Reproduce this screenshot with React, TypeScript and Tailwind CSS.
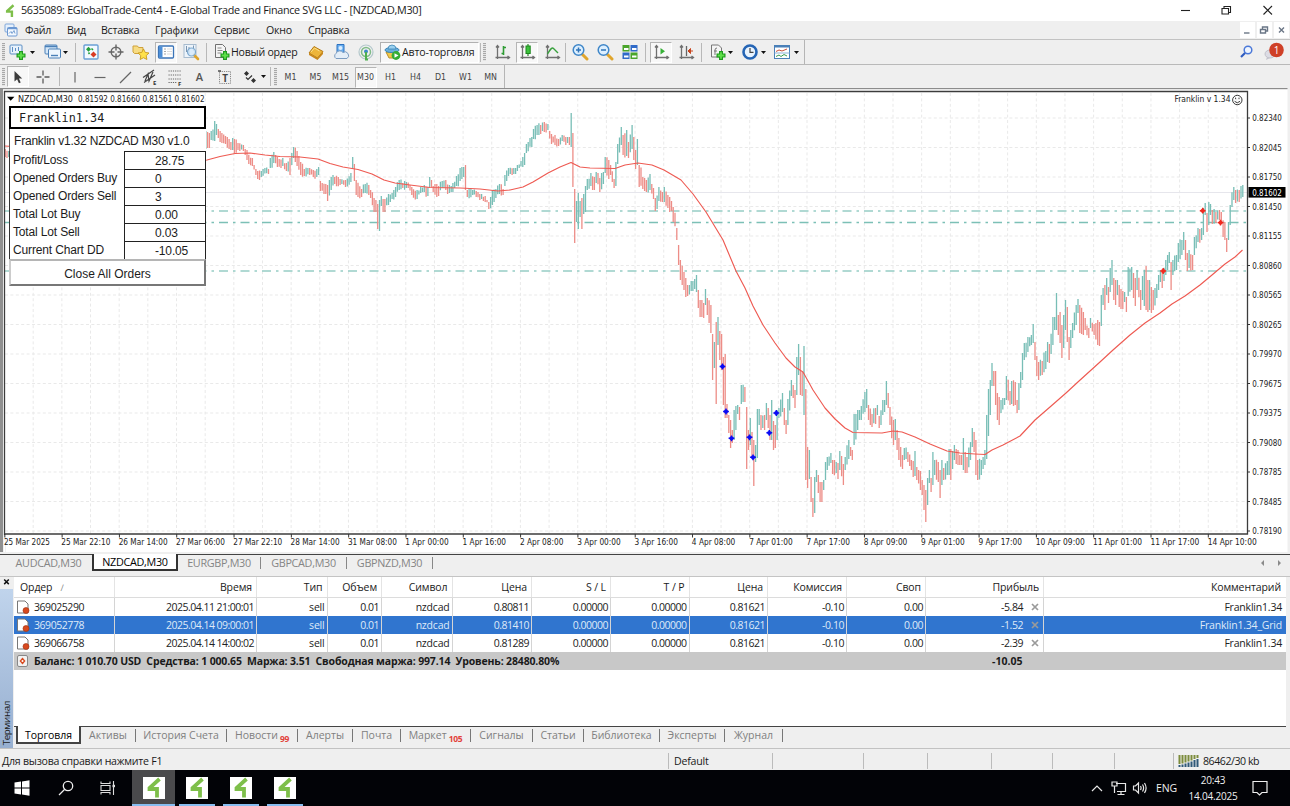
import React from "react";

type Point = [number, number, number];

// x, high, low of the notable bars, everything between is interpolated
const swings: Point[] = [
  [5, 149, 157], [9, 151, 157], [30, 140, 150], [120, 135, 145], [206, 131, 149], [209, 133, 148], [212, 131, 140],
  [215, 121, 141], [217, 124, 135], [220, 131, 142], [222, 133, 143], [226, 136, 144], [230, 142, 150],
  [234, 139, 153], [238, 143, 150], [243, 145, 151], [247, 150, 160], [252, 158, 166], [257, 171, 179],
  [262, 171, 177], [268, 169, 174], [271, 158, 168], [274, 152, 163], [277, 157, 167], [282, 158, 166],
  [286, 163, 171], [290, 158, 175], [292, 153, 165], [294, 147, 158], [297, 151, 166], [300, 162, 175],
  [305, 169, 176], [310, 168, 175], [316, 169, 177], [319, 167, 175], [321, 181, 191], [325, 184, 194],
  [328, 185, 201], [331, 177, 190], [335, 177, 184], [340, 179, 185], [345, 180, 187], [350, 173, 182],
  [352, 157, 169], [354, 164, 181], [357, 180, 195], [361, 189, 197], [365, 184, 193], [368, 185, 195],
  [371, 190, 198], [374, 198, 212], [376, 200, 212], [378, 204, 229], [380, 200, 231], [381, 196, 206],
  [384, 199, 212], [388, 194, 205], [392, 193, 199], [396, 187, 197], [399, 180, 190], [403, 183, 188],
  [407, 182, 188], [412, 187, 195], [417, 190, 199], [421, 187, 193], [424, 185, 192], [427, 187, 196],
  [430, 177, 187], [433, 186, 192], [438, 186, 196], [442, 181, 188], [445, 180, 190], [449, 185, 193],
  [453, 183, 192], [457, 176, 186], [461, 168, 181], [463, 167, 177], [465, 165, 190], [468, 190, 197],
  [472, 190, 195], [477, 191, 197], [481, 194, 199], [486, 196, 202], [489, 202, 209], [492, 190, 205],
  [496, 189, 198], [500, 184, 194], [503, 189, 195], [505, 175, 186], [509, 168, 176], [513, 168, 174],
  [518, 165, 171], [522, 157, 167], [525, 153, 165], [527, 144, 153], [531, 137, 147], [534, 129, 139],
  [538, 125, 135], [541, 125, 134], [544, 122, 132], [548, 124, 130], [551, 134, 144], [555, 135, 145],
  [559, 139, 146], [562, 135, 141], [565, 137, 145], [568, 137, 143], [570, 137, 145], [571.5, 113, 147],
  [573, 133, 187], [575, 189, 243], [577, 201, 222], [578.5, 193, 229], [580, 201, 217], [582, 198, 229],
  [584, 194, 214], [586, 186, 212], [588, 179, 190], [591, 173, 186], [594, 177, 190], [597, 172, 183],
  [600, 178, 192], [603, 172, 184], [605, 157, 173], [608, 160, 179], [611, 165, 175], [614, 179, 188],
  [616, 162, 186], [618, 144, 164], [621, 127, 145], [623, 135, 155], [626, 130, 156], [629, 142, 158],
  [632, 125, 149], [634, 137, 160], [636, 150, 169], [638, 139, 165], [640, 165, 187], [643, 177, 189],
  [646, 180, 192], [650, 174, 190], [653, 188, 199], [656, 198, 211], [659, 187, 201], [662, 192, 202],
  [664, 187, 202], [667, 195, 208], [671, 201, 211], [674, 207, 222], [677, 228, 240], [679, 245, 265],
  [681, 260, 280], [684, 272, 290], [686, 278, 297], [688, 285, 296], [691, 281, 291], [694, 279, 289],
  [696, 275, 292], [698, 290, 308], [701, 300, 317], [703, 303, 318], [705, 289, 305], [708, 298, 315],
  [710, 305, 333], [711.5, 323, 355], [713, 334, 380], [714.5, 342, 368], [716.5, 322, 404], [718, 317, 345],
  [720, 331, 360], [722, 334, 370], [723.5, 357, 405], [725, 354, 418], [727, 404, 418], [729, 415, 433],
  [731, 420, 448], [733, 430, 443], [735, 410, 440], [737, 405, 414], [739, 407, 420], [742, 385, 404],
  [744, 387, 402], [746.5, 407, 469], [748.5, 430, 450], [750, 418, 445], [751.5, 432, 458], [753.5, 440, 486],
  [755.5, 445, 462], [757, 409, 458], [759, 409, 425], [761, 415, 430], [764, 415, 430], [766, 403, 420],
  [768, 408, 428], [770, 415, 440], [772, 400, 440], [774, 421, 450], [776, 425, 448], [777.5, 410, 440],
  [779, 408, 418], [782, 393, 412], [784, 408, 425], [786, 420, 434], [788, 399, 425], [791, 380, 396],
  [793, 385, 398], [795, 390, 408], [797, 357, 395], [798.5, 344, 375], [800.5, 357, 395], [802.5, 372, 396],
  [804, 346, 415], [806, 389, 480], [807.5, 447, 488], [809, 450, 479], [811, 477, 502], [813, 498, 517],
  [815, 477, 513], [817, 470, 482], [819, 475, 493], [821, 482, 502], [823, 480, 490], [825, 462, 480],
  [828, 457, 470], [831, 453, 463], [833, 460, 474], [836, 462, 473], [838, 463, 479], [840, 451, 470],
  [843, 464, 485], [845, 457, 470], [848, 440, 459], [851, 447, 456], [853, 450, 460], [855, 414, 445],
  [857, 410, 430], [860, 410, 420], [862, 406, 420], [864, 392, 412], [866, 389, 408], [868, 405, 420],
  [872, 414, 427], [875, 408, 424], [877, 405, 415], [880, 416, 428], [883, 400, 415], [885, 400, 412],
  [886.5, 381, 405], [888, 393, 408], [890, 407, 425], [893, 420, 445], [895, 419, 440], [897, 430, 450],
  [899, 438, 460], [902, 455, 469], [905, 448, 460], [908, 452, 462], [911, 460, 470], [913, 461, 477],
  [915, 451, 476], [917, 467, 480], [920, 471, 490], [922, 480, 495], [924, 485, 510], [925.5, 490, 522],
  [927, 478, 505], [929, 470, 483], [931, 478, 492], [933, 452, 485], [935, 460, 475], [938, 462, 482],
  [940, 470, 498], [942, 460, 485], [944, 468, 480], [947, 461, 475], [949, 449, 475], [951, 449, 480],
  [953, 451, 469], [955, 445, 460], [958, 450, 465], [961, 455, 465], [963, 438, 470], [965, 452, 473],
  [967, 457, 473], [970, 442, 460], [972, 428, 447], [974, 432, 452], [976, 440, 475], [978, 460, 480],
  [981, 460, 475], [983, 457, 469], [985, 450, 465], [987, 415, 459], [988.5, 389, 436], [990.5, 380, 415],
  [992, 363, 386], [994, 371, 386], [996, 371, 405], [998, 393, 420], [999.5, 397, 425], [1001, 400, 413],
  [1004, 398, 405], [1005, 378, 402], [1007, 376, 400], [1010, 391, 405], [1012, 381, 404], [1015, 382, 405],
  [1017, 400, 413], [1019, 383, 410], [1021, 372, 388], [1023, 353, 380], [1025, 343, 360], [1028, 337, 352],
  [1031, 335, 345], [1033, 324, 343], [1035, 342, 360], [1037, 356, 376], [1039, 362, 380], [1042, 361, 375],
  [1045, 351, 369], [1048, 342, 362], [1050, 344, 363], [1053, 317, 345], [1055, 317, 330], [1056.5, 293, 330],
  [1058, 315, 335], [1060, 312, 343], [1062, 325, 358], [1064, 315, 348], [1066, 300, 330], [1067.5, 307, 342],
  [1069, 337, 360], [1071, 330, 348], [1073, 323, 338], [1076, 305, 325], [1078, 299, 313], [1080, 305, 333],
  [1083, 312, 335], [1085, 318, 330], [1088, 328, 338], [1091, 318, 328], [1094, 324, 335], [1097, 320, 345],
  [1099, 322, 346], [1101, 295, 326], [1103, 288, 305], [1105, 285, 310], [1107, 278, 295], [1109, 287, 303],
  [1111, 268, 292], [1112.5, 260, 285], [1114, 278, 300], [1116, 280, 305], [1118, 280, 295], [1120, 285, 307],
  [1122, 291, 309], [1125, 292, 302], [1127, 297, 312], [1129, 267, 296], [1131, 267, 290], [1134, 273, 298],
  [1136, 278, 306], [1138, 270, 290], [1140, 290, 310], [1141, 298, 319], [1143, 276, 300], [1146, 266, 310],
  [1148, 280, 312], [1150, 280, 310], [1152, 287, 313], [1154, 290, 310], [1156, 284, 298], [1159, 275, 290],
  [1161, 270, 282], [1163, 272, 288], [1165, 260, 275], [1167, 255, 270], [1168.5, 252, 263], [1171, 262, 290],
  [1173, 260, 275], [1176, 255, 270], [1179, 243, 262], [1181, 240, 255], [1184, 232, 250], [1186, 240, 260],
  [1188, 253, 271], [1189.5, 250, 268], [1192, 255, 270], [1195, 237, 255], [1198, 228, 242], [1201, 228, 240],
  [1203, 208, 235], [1205, 203, 215], [1207, 213, 232], [1209, 202, 225], [1211, 204, 215], [1213, 210, 224],
  [1216, 212, 223], [1219, 210, 220], [1221, 212, 224], [1224, 222, 240], [1227, 238, 252], [1228.5, 222, 240],
  [1229.5, 205, 225], [1231, 195, 212], [1233, 187, 200], [1236, 190, 203], [1239, 190, 202], [1243, 185, 197],
];

const average: [number, number][] = [
  [5, 146], [20, 147], [60, 150], [120, 158], [190, 162], [207, 160], [220, 156.5], [235, 153.5], [250, 153],
  [265, 155], [280, 156.5], [300, 157], [318, 159], [330, 163.5], [343, 167], [358, 169.5], [372, 174],
  [384, 180], [395, 183], [410, 185], [430, 187.5], [460, 188], [480, 189], [498, 191], [510, 190], [523, 187],
  [533, 182], [548, 173], [560, 167], [571, 162.5], [580, 167], [590, 168], [615, 168.5], [625, 165],
  [638, 163], [652, 165], [664, 170], [681, 180], [693, 194], [706, 212], [723, 240], [736, 271], [745, 288],
  [753, 306], [763, 325], [775, 343], [786, 358], [795, 367], [803, 372], [813, 390], [825, 408], [835, 419],
  [845, 428], [853, 432.5], [882, 433], [893, 431], [902, 432], [915, 437], [930, 444], [947, 451],
  [960, 453], [975, 454], [985, 454.5], [992, 450], [1003, 445], [1020, 436], [1035, 420], [1050, 407],
  [1066, 393], [1079, 381], [1100, 362], [1113, 350], [1130, 335], [1145, 323], [1160, 313], [1172, 304],
  [1185, 296], [1200, 285], [1212, 275], [1225, 264], [1235, 257], [1242.5, 250],
];

const buildBars = () => {
  let up = "";
  let down = "";
  let prev = 150;
  let i = 0;
  for (let n = 0; n < 692; n++) {
    const x = 5.2 + n * 1.791;
    while (i < swings.length - 2 && swings[i + 1][0] < x) i++;
    const a = swings[i];
    const b = swings[i + 1];
    let hi: number;
    let lo: number;
    if (Math.abs(a[0] - x) < 0.9) {
      [, hi, lo] = a;
    } else if (Math.abs(b[0] - x) < 0.9) {
      [, hi, lo] = b;
    } else {
      const t = Math.min(1, (x - a[0]) / (b[0] - a[0]));
      hi = a[1] + (b[1] - a[1]) * t + Math.sin(n * 12.9) * 2;
      lo = a[2] + (b[2] - a[2]) * t + Math.cos(n * 7.3) * 2;
    }
    const mid = (hi + lo) / 2;
    const seg = `M${x.toFixed(1)} ${hi.toFixed(1)}V${lo.toFixed(1)}`;
    if (mid < prev) up += seg;
    else down += seg;
    prev = mid;
  }
  return { up, down };
};

const bars = buildBars();

const dates = [
  "25 Mar 2025", "25 Mar 22:10", "26 Mar 14:00", "27 Mar 06:00", "27 Mar 22:10", "28 Mar 14:00", "31 Mar 08:00",
  "1 Apr 00:00", "1 Apr 16:00", "2 Apr 08:00", "3 Apr 00:00", "3 Apr 16:00", "4 Apr 08:00", "7 Apr 01:00",
  "7 Apr 17:00", "8 Apr 09:00", "9 Apr 01:00", "9 Apr 17:00", "10 Apr 09:00", "11 Apr 01:00", "11 Apr 17:00",
  "14 Apr 10:00",
];

const prices = [
  "0.82340", "0.82045", "0.81750", "0.81450", "0.81155", "0.80860", "0.80565", "0.80265", "0.79970", "0.79675",
  "0.79375", "0.79080", "0.78785", "0.78485", "0.78190",
];

const dateWidth = (d: string) => (d === "25 Mar 2025" ? 46 : d.length === 12 ? 49 : 43.5);

const Marker = ({ x, y, color }: { x: number; y: number; color: string }) => (
  <g fill={color} stroke={color}>
    <circle cx={x} cy={y} r="1.900" strokeWidth="0.400" />
    <path d={`M${x} ${y - 2.9}v5.800M${x - 2.9} ${y}h5.800`} strokeWidth="1.400" />
  </g>
);

const Chart = () => (
  <svg viewBox="0 88 1290 464" className="block h-[464px] w-[1290px]" fontFamily="'DejaVu Sans Condensed','DejaVu Sans',sans-serif">
    <rect x="0" y="88" width="1290" height="464" fill="#fff" />
    <rect x="0" y="88" width="3" height="464" fill="#909090" />
    <rect x="0" y="87.6" width="1288" height="1.6" fill="#8c8c8c" />
    <rect x="1287.5" y="88" width="2.5" height="464" fill="#efefef" />
    <g stroke="#e9e9e9" strokeDasharray="3 2.4" strokeWidth="1">
      {Array.from({ length: 43 }, (_, n) => (
        <line key={n} x1={33.2 + n * 28.66} x2={33.2 + n * 28.66} y1="93" y2="534" />
      ))}
      {prices.map((p, n) => (
        <line key={p} x1="5" x2="1247" y1={118 + n * 29.5} y2={118 + n * 29.5} />
      ))}
    </g>
    <line x1="5" x2="1247" y1="192.5" y2="192.5" stroke="#e6e6ec" />
    <g strokeWidth="1.5" strokeDasharray="9 5 2.5 5" strokeDashoffset="1">
      <line x1="5" x2="1247" y1="211" y2="211" stroke="#96cdc5" />
      <line x1="5" x2="1247" y1="222.6" y2="222.6" stroke="#7cc0b6" />
      <line x1="5" x2="1247" y1="271" y2="271" stroke="#96cdc5" />
    </g>
    <path d={bars.up} stroke="#78beb6" strokeWidth="1.3" fill="none" />
    <path d={bars.down} stroke="#ed8d87" strokeWidth="1.3" fill="none" />
    <polyline points={average.map((p) => p.join(",")).join(" ")} fill="none" stroke="#ee5a52" strokeWidth="1.15" strokeLinejoin="round" />
    {[[722.5, 366.5], [726, 411.5], [731.5, 438.3], [749.5, 437.3], [753, 457.3], [769.3, 432.8], [776.3, 413]].map(([x, y]) => (
      <Marker key={x} x={x} y={y} color="#0a0af5" />
    ))}
    {[[1202.7, 210.7], [1220.5, 222.6], [1163.2, 271]].map(([x, y]) => (
      <Marker key={x} x={x} y={y} color="#f2281e" />
    ))}
    <path d="M4.5 552V91.5H1247.5V534H4.5" fill="none" stroke="#3c3c3c" strokeWidth="1.3" />
    <rect x="3.5" y="535" width="2" height="17" fill="#fff" />
    {dates.map((d, n) => (
      <g key={d}>
        <line x1={4.8 + n * 57.31} x2={4.8 + n * 57.31} y1="534" y2="537.5" stroke="#333" />
        <text x={4 + n * 57.32} y="545.2" fontSize="8.4" fill="#222" textLength={dateWidth(d)} lengthAdjust="spacingAndGlyphs">
          {d}
        </text>
      </g>
    ))}
    {prices.map((p, n) => (
      <g key={p}>
        <line x1="1247" x2="1250" y1={118 + n * 29.5} y2={118 + n * 29.5} stroke="#333" />
        <text x="1252.3" y={121 + n * 29.5} fontSize="8.6" fill="#222" textLength="29.6" lengthAdjust="spacingAndGlyphs">
          {p}
        </text>
      </g>
    ))}
    <rect x="1248.5" y="187" width="37" height="10.6" fill="#000" />
    <text x="1252.3" y="195.6" fontSize="8.6" fill="#fff" textLength="29.6" lengthAdjust="spacingAndGlyphs">0.81602</text>
    <path d="M7 96.7h7.4l-3.7 4z" fill="#000" />
    <text x="18" y="101.8" fontSize="8.6" fill="#222" textLength="55" lengthAdjust="spacingAndGlyphs">NZDCAD,M30</text>
    <text x="78" y="101.8" fontSize="8.6" fill="#222" textLength="126.5" lengthAdjust="spacingAndGlyphs">
      0.81592 0.81660 0.81561 0.81602
    </text>
    <text x="1174.5" y="102.3" fontSize="8.8" fill="#222" textLength="56" lengthAdjust="spacingAndGlyphs">Franklin v 1.34</text>
    <g stroke="#222" fill="none" strokeWidth="0.9">
      <circle cx="1237.3" cy="100" r="4.7" />
      <path d="M1234.6 101.3q2.7 3 5.4 0M1235.6 97.6v1.6M1239 97.6v1.6" />
    </g>
  </svg>
);

const stats = [
  ["Profit/Loss", "28.75"],
  ["Opened Orders Buy", "0"],
  ["Opened Orders Sell", "3"],
  ["Total Lot Buy", "0.00"],
  ["Total Lot Sell", "0.03"],
  ["Current Chart DD", "-10.05"],
];

const FranklinPanel = () => (
  <div className="absolute left-[9px] top-[18px] w-[197px] bg-white font-['Liberation_Sans',sans-serif] text-[12px] text-[#1c1c1c]">
    <div className="flex h-[23px] items-center border-2 border-black pl-2 pt-0.5 font-['DejaVu_Sans_Mono',monospace] text-[11.8px]">
      Franklin1.34
    </div>
    <div className="flex h-[22px] items-end border-l border-[#555] pb-0.5 pl-1 leading-4">
      <span className="tracking-[-0.2px]">Franklin v1.32 NZDCAD M30 v1.0</span>
    </div>
    <div className="grid grid-cols-[114px_82px] border-l border-[#333]">
      {stats.map(([label, value]) => (
        <React.Fragment key={label}>
          <span className="flex h-[18px] items-center pl-[3px] tracking-[-0.15px]">{label}</span>
          <span className="flex h-[18px] items-center border border-b-0 border-[#222] pl-[30px] pt-px tracking-[-0.15px]">{value}</span>
        </React.Fragment>
      ))}
    </div>
    <div className="flex h-[27px] items-center justify-center border-2 border-[#777] border-l-[#ccc] border-t-[#b5b5b5] pt-0.5">
      Close All Orders
    </div>
  </div>
);

const Logo = ({ className }: { className: string }) => (
  <svg viewBox="0 0 22 22" className={className}>
    <path d="M16.500 2L6.500 11v1H14v8.500" fill="none" stroke="#7ebf4a" strokeWidth="3.800" />
  </svg>
);

const Ico = ({ children }: { children: React.ReactNode }) => (
  <svg viewBox="0 0 18 18" className="h-[18px] w-[18px] shrink-0">
    {children}
  </svg>
);

const Cell = ({ children, on = false }: { children: React.ReactNode; on?: boolean }) =>
  on ? (
    <div className="mx-[1.5px] flex h-[21px] w-[22px] shrink-0 items-center justify-center border border-[#b5b5b5] border-b-white border-r-white bg-[#f8f8f8]">
      {children}
    </div>
  ) : (
    <div className="flex w-[25px] shrink-0 items-center justify-center">{children}</div>
  );

const Arrow = ({ className = "" }: { className?: string }) => (
  <svg viewBox="0 0 5 3" className={`h-[3px] w-[5px] shrink-0 ${className}`}>
    <path d="M0 0h5l-2.500 3z" fill="#111" />
  </svg>
);

const Sep = ({ className = "" }: { className?: string }) => (
  <div className={`h-[19px] w-px shrink-0 bg-[#b8b8b8] ${className}`} />
);

const Grip = () => <div className="h-[18px] w-[3px] shrink-0 bg-[repeating-linear-gradient(#a8a8a8_0_1px,#e4e4e4_1px_2px)]" />;

const plus = <path d="M12 8v9M7.500 12.500h9" stroke="#1f9a1f" strokeWidth="4" />;
const plusHi = <path d="M12 9.200v6.600M8.700 12.500h6.600" stroke="#5fe04a" strokeWidth="1.8" />;
const axes = (
  <path d="M4.500 2.500V16M2.500 14.500H16M3 4.500l1.500-2 1.500 2M14.500 13l2 1.500-2 1.500" fill="none" stroke="#707070" strokeWidth="1.3" />
);

const Zoom = ({ minus }: { minus?: boolean }) => (
  <Ico>
    <path d="M11.500 11.500L16 16" stroke="#e0a52c" strokeWidth="3" strokeLinecap="round" />
    <circle cx="7.500" cy="7" r="5.300" fill="#dcefff" stroke="#3f86c8" strokeWidth="1.5" />
    <path d={minus ? "M5 7h5" : "M5 7h5M7.500 4.500v5"} stroke="#2f74b8" strokeWidth="1.5" />
  </Ico>
);

const StandardToolbar = () => (
  <div className="flex h-[25px] items-center border-b border-[#b9b9b9]">
    <div className="flex h-full w-[805px] items-center border-r border-[#b5b5b5] pl-0.5">
      <Grip />
      <Cell>
        <Ico>
          <rect x="1" y="2" width="12" height="9" rx="1" fill="#e8f2fc" stroke="#5d8fc4" />
          <path d="M3.500 4v5M6.500 5v3M9.500 4v4" stroke="#5d8fc4" />
          {plus}
          {plusHi}
        </Ico>
      </Cell>
      <Arrow />
      <div className="w-[5px]" />
      <Cell>
        <Ico>
          <rect x="1" y="2" width="12" height="9" rx="1" fill="#d5e7f8" stroke="#4a80b8" />
          <path d="M1 3.500h12" stroke="#4a80b8" strokeWidth="1.5" />
          <rect x="4.500" y="6" width="12" height="9" rx="1" fill="#eef6fd" stroke="#4a80b8" />
          <path d="M7 12.500h7" stroke="#4a80b8" strokeWidth="1.4" />
        </Ico>
      </Cell>
      <Arrow className="-ml-0.5" />
      <Sep className="ml-[7px] mr-0.5" />
      <Cell>
        <Ico>
          <rect x="2" y="2" width="14" height="14" rx="1" fill="#f3f9ff" stroke="#6ba0d6" strokeWidth="1.4" />
          <path d="M6.500 3.800l2.500 2.500-2.500 2.500L4 6.300z" fill="#24a03c" />
          <path d="M11.500 8.500l3 3-3 3-3-3z" fill="#d93a24" />
          <path d="M9.500 5.500l1.500 1.500M6.500 9.500l1 1.500" stroke="#24a03c" strokeWidth="1.600" />
        </Ico>
      </Cell>
      <Cell>
        <Ico>
          <circle cx="9" cy="9" r="4.800" fill="none" stroke="#666" strokeWidth="1.4" />
          <path d="M9 1.500v6M9 10.500v6M1.500 9h6M10.500 9h6" stroke="#666" strokeWidth="1.400" />
        </Ico>
      </Cell>
      <Cell>
        <Ico>
          <path d="M1 3h4.500l1 1.500H11v6H2.500L1 9z" fill="#f7dc83" stroke="#cfa13a" />
          <path d="M11.500 6l1.700 3.400 3.800.6-2.800 2.600.7 3.900-3.400-1.800-3.400 1.800.7-3.900L6 10l3.800-.6z" fill="#ffe14a" stroke="#c89a1c" strokeWidth=".9" />
        </Ico>
      </Cell>
      <Cell on>
        <Ico>
          <rect x="1.500" y="3" width="15" height="12" rx="1" fill="#fff" stroke="#3b74b8" strokeWidth="1.300" />
          <rect x="2" y="3.500" width="3.500" height="11" fill="#4d8fd8" />
          <path d="M7.500 6h1M7.500 8.500h1M7.500 11h1" stroke="#555" />
          <path d="M10 6h5M10 8.500h5M10 11h5" stroke="#ccc" strokeWidth=".7" />
        </Ico>
      </Cell>
      <Cell>
        <Ico>
          <rect x="2" y="1.500" width="12" height="13" fill="#edf4fb" stroke="#a8bccf" />
          <path d="M4.500 3v6M7 4v7M11.500 2.500v5" stroke="#7b95af" />
          <path d="M12 12l4 4" stroke="#e0a52c" strokeWidth="2.600" strokeLinecap="round" />
          <circle cx="9.500" cy="9" r="4" fill="#d5eafc" fillOpacity=".8" stroke="#7da9cf" strokeWidth="1.200" />
        </Ico>
      </Cell>
      <Sep className="ml-[3px]" />
      <div className="flex items-center pl-[6px]">
        <Ico>
          <path d="M2.500 1.500h7l3 3v10h-10z" fill="#f4f4f4" stroke="#707070" />
          <path d="M4.500 5h4M4.500 7.500h5M4.500 10h4" stroke="#8a8a8a" />
          {plus}
          {plusHi}
        </Ico>
        <span className="w-[69px] whitespace-nowrap text-[10.6px] tracking-[-0.25px]">Новый ордер</span>
      </div>
      <div className="w-[3px]" />
      <Cell>
        <Ico>
          <path d="M2 10l5-6.500 9 5L10.500 15z" fill="#edb53a" stroke="#b47a14" />
          <path d="M2 10v2l8.500 5 5.500-6V8.500L10.500 15z" fill="#c9881c" />
          <path d="M4 9l3.500-4 5 3" stroke="#fbe08c" fill="none" />
        </Ico>
      </Cell>
      <Cell>
        <Ico>
          <path d="M5 1.500h7v9H5z" fill="#69aef0" stroke="#2c72c0" />
          <circle cx="8.500" cy="5" r="2" fill="#d9edff" />
          <path d="M4 15.500a3 3 0 010-5 4 4 0 017-1 3.200 3.200 0 014 6z" fill="#e4eef8" stroke="#7c9cc0" />
        </Ico>
      </Cell>
      <Cell>
        <Ico>
          <circle cx="9" cy="9" r="7" fill="none" stroke="#b4c8cc" strokeWidth="1.200" />
          <circle cx="9" cy="9" r="4.500" fill="none" stroke="#7fbb88" strokeWidth="1.500" />
          <circle cx="9" cy="8.500" r="2" fill="#3a88c8" />
          <path d="M9 9v7.500h2" stroke="#4eaf4e" strokeWidth="2" fill="none" />
        </Ico>
      </Cell>
      <div className="ml-0.5 flex h-[21px] w-[99px] items-center border border-[#b0b0b0] border-b-white border-r-white bg-[#f8f8f8] pl-0.5">
        <Ico>
          <path d="M3 9h12l-2 6H6z" fill="#f2c94a" stroke="#b8902c" />
          <ellipse cx="9" cy="7" rx="7" ry="2.600" fill="#68b0dc" stroke="#3d86b8" />
          <path d="M5 6a4 4 0 018 0z" fill="#9ad0ee" stroke="#3d86b8" strokeWidth=".8" />
          <circle cx="13" cy="12.500" r="4.400" fill="#35ad35" />
          <path d="M11.500 10.200v4.600l4-2.300z" fill="#fff" />
        </Ico>
        <span className="whitespace-nowrap pl-px text-[10.6px] tracking-[-0.15px]">Авто-торговля</span>
      </div>
      <Sep className="ml-[1px] mr-[2px]" />
      <Grip />
      <div className="w-[3px]" />
      <Cell>
        <Ico>
          {axes}
          <path d="M10.500 3v9M8.500 10.500h2M10.500 4.500h2.500" stroke="#2f9c34" strokeWidth="1.600" />
        </Ico>
      </Cell>
      <Cell on>
        <Ico>
          {axes}
          <path d="M10 1v12" stroke="#2a8a2a" strokeWidth="1.200" />
          <rect x="8" y="3" width="4.200" height="7.500" fill="#3cc23c" stroke="#1d861d" />
        </Ico>
      </Cell>
      <Cell>
        <Ico>
          {axes}
          <path d="M4.500 11q4-7.500 6-5.500t4.500 4.500" stroke="#37a03c" strokeWidth="1.400" fill="none" />
        </Ico>
      </Cell>
      <Sep className="mx-[1px]" />
      <Cell>
        <Zoom />
      </Cell>
      <Cell>
        <Zoom minus />
      </Cell>
      <Cell>
        <Ico>
          <rect x="1.500" y="2" width="7" height="6.500" fill="#4aa52a" />
          <rect x="9.500" y="2" width="7" height="6.500" fill="#2f6ac8" />
          <rect x="1.500" y="9.500" width="7" height="6.500" fill="#2f6ac8" />
          <rect x="9.500" y="9.500" width="7" height="6.500" fill="#4aa52a" />
          <path d="M3 6h4.500M11 6h4.500M3 13.500h4.500M11 13.500h4.500" stroke="#fff" strokeWidth="2.200" />
        </Ico>
      </Cell>
      <Sep className="ml-[3px] mr-[2px]" />
      <Cell on>
        <Ico>
          {axes}
          <path d="M8.500 5v6.500l4.500-3.200z" fill="#35b035" />
        </Ico>
      </Cell>
      <Cell>
        <Ico>
          {axes}
          <path d="M9.500 3v10" stroke="#666" strokeWidth="1.300" />
          <path d="M16 8h-4M13.500 5.500L11 8l2.500 2.500z" fill="#c8451e" stroke="#c8451e" />
        </Ico>
      </Cell>
      <Sep className="ml-[3px] mr-[3px]" />
      <Cell>
        <Ico>
          <path d="M2.500 2h7l3 3v9h-10z" fill="#f4f4f4" stroke="#777" />
          <path d="M6 12V7q0-2 2-2M5 8h3" stroke="#777" fill="none" />
          {plus}
          {plusHi}
        </Ico>
      </Cell>
      <Arrow className="-ml-0.5" />
      <div className="w-1" />
      <Cell>
        <Ico>
          <circle cx="9" cy="9" r="6.500" fill="#e9f4ff" stroke="#2565b5" strokeWidth="2.600" />
          <path d="M9 5v4.300h3.500" stroke="#444" strokeWidth="1.200" fill="none" />
        </Ico>
      </Cell>
      <Arrow className="-ml-px" />
      <div className="w-[3px]" />
      <Cell>
        <Ico>
          <rect x="1.500" y="2.500" width="15" height="13" fill="#fff" stroke="#4a80b8" />
          <path d="M1.500 3.500h15" stroke="#4a80b8" strokeWidth="2" />
          <path d="M3 8.500l3-1.500 3 1 5-2" stroke="#c8503c" fill="none" />
          <path d="M1.500 10h15" stroke="#8fb4d8" />
          <path d="M3 13.500l3-1.500 2 1.500 3-2 3 1.500" stroke="#3c9c50" fill="none" />
        </Ico>
      </Cell>
      <Arrow />
    </div>
    <div className="flex-1" />
    <svg viewBox="0 0 46 20" className="mr-[6px] h-5 w-[46px]">
      <circle cx="10" cy="8" r="3.800" fill="#eef5ff" stroke="#4a78d8" strokeWidth="1.500" />
      <path d="M7 11l-4 4" stroke="#2f5cc0" strokeWidth="2.200" />
      <ellipse cx="32" cy="12" rx="5" ry="4" fill="#dcdce4" stroke="#b0b0bc" strokeWidth=".7" />
      <path d="M29 15l-1 3 4-2z" fill="#c4c4ce" />
      <circle cx="38.500" cy="8" r="7.300" fill="#cf4027" />
      <text x="38.500" y="11.500" textAnchor="middle" fontSize="10" fill="#fff" fontFamily="Open Sans">1</text>
    </svg>
  </div>
);

const frames = ["M1", "M5", "M15", "M30", "H1", "H4", "D1", "W1", "MN"];

const DrawToolbar = () => (
  <div className="flex h-[23px] items-center">
    <div className="flex h-full w-[505px] items-center border-r border-[#b5b5b5] pl-0.5">
      <Grip />
      <Cell on>
        <Ico>
          <path d="M5.500 3v10.500l2.600-2.300 1.800 4 1.800-.8-1.800-3.900h3.300z" fill="#3c3c3c" />
        </Ico>
      </Cell>
      <Cell>
        <Ico>
          <path d="M9 2.500v5M9 10.500v5M2.500 9h5M10.500 9h5" stroke="#5a5a5a" strokeWidth="1.300" />
        </Ico>
      </Cell>
      <Sep className="ml-[4px] mr-[2px]" />
      <Cell>
        <Ico>
          <path d="M9 4v10.500" stroke="#666" strokeWidth="1.200" />
        </Ico>
      </Cell>
      <Cell>
        <Ico>
          <path d="M3.500 9.500h11" stroke="#666" strokeWidth="1.200" />
        </Ico>
      </Cell>
      <Cell>
        <Ico>
          <path d="M4 15L15 4" stroke="#666" strokeWidth="1.200" />
        </Ico>
      </Cell>
      <Cell>
        <Ico>
          <path d="M2 9.500L13 2M3 14.500L14 7M4 13l3-7 1 7 4-9" stroke="#444" fill="none" strokeWidth="1.200" />
          <text x="12" y="17" fontSize="6" fontWeight="bold" fill="#333" fontFamily="Open Sans">E</text>
        </Ico>
      </Cell>
      <Cell>
        <Ico>
          <path d="M2.500 3h13M2.500 7h13M2.500 11h13M2.500 14.500h8" stroke="#666" strokeDasharray="1.200 1" />
          <text x="12" y="17.500" fontSize="6" fontWeight="bold" fill="#333" fontFamily="Open Sans">F</text>
        </Ico>
      </Cell>
      <Cell>
        <span className="text-[11px] font-semibold text-[#555]">A</span>
      </Cell>
      <Cell>
        <Ico>
          <rect x="3.500" y="3.500" width="11" height="12" fill="none" stroke="#888" strokeDasharray="1.200 1" />
          <path d="M2 3h3" stroke="#444" strokeWidth="1.400" />
          <text x="9.200" y="13.500" textAnchor="middle" fontSize="10" fontWeight="bold" fill="#444" fontFamily="Open Sans">T</text>
        </Ico>
      </Cell>
      <Cell>
        <Ico>
          <path d="M5.500 3L8 5.500 5.500 8 3 5.500zM12.500 10l2.500 2.500-2.500 2.500-2.500-2.500z" fill="#333" />
          <path d="M5 9.500l2 2 4-4" stroke="#333" fill="none" strokeWidth="1.200" />
        </Ico>
      </Cell>
      <Arrow className="-ml-px" />
      <Sep className="ml-[4px] mr-[3px]" />
      <Grip />
      <div className="flex h-full flex-1 items-center pl-px pt-px text-[8.800px] text-[#444] font-['DejaVu_Sans_Condensed','DejaVu_Sans',sans-serif]">
        {frames.map((f) => (
          <Cell key={f} on={f === "M30"}>
            {f}
          </Cell>
        ))}
      </div>
    </div>
  </div>
);

const cols =
  "grid-cols-[101px_142px_70.500px_54.500px_70.500px_79.500px_79px_78.500px_78.500px_79px_79px_118px_1fr]";

const orders = [
  ["369025290", "2025.04.11 21:00:01", "sell", "0.01", "nzdcad", "0.80811", "0.00000", "0.00000", "0.81621", "-0.10", "0.00", "-5.84", "Franklin1.34"],
  ["369052778", "2025.04.14 09:00:01", "sell", "0.01", "nzdcad", "0.81410", "0.00000", "0.00000", "0.81621", "-0.10", "0.00", "-1.52", "Franklin1.34_Grid"],
  ["369066758", "2025.04.14 14:00:02", "sell", "0.01", "nzdcad", "0.81289", "0.00000", "0.00000", "0.81621", "-0.10", "0.00", "-2.39", "Franklin1.34"],
];

const heads = ["Время", "Тип", "Объем", "Символ", "Цена", "S / L", "T / P", "Цена", "Комиссия", "Своп", "Прибыль", "Комментарий"];

const isText = (n: number) => n === 2 || n === 4 || n === 12;

const Terminal = () => (
  <div className="flex h-[172px] border-t border-[#c4c4c4] bg-[#efefef]">
    <div className="flex w-[14px] flex-col">
      <svg viewBox="0 0 14 12" className="h-3 w-[14px]">
        <path d="M4.200 2.500l4.600 4.600M8.800 2.500L4.200 7.100" stroke="#111" strokeWidth="1.500" />
      </svg>
      <div className="flex w-[13px] flex-1 items-end justify-center bg-gradient-to-b from-[#c0d4ec] to-[#97afd0] pb-[3px]">
        <span className="rotate-180 text-[9.800px] leading-[13px] tracking-[-0.400px] [writing-mode:vertical-rl]">Терминал</span>
      </div>
    </div>
    <div className="flex w-[1272px] flex-col">
      <div className="flex h-[150px] flex-col border-b border-[#444] bg-white text-[10.500px]">
        <div className={`grid h-[21px] items-center border-b border-[#dcdcdc] tracking-[-0.1px] ${cols}`}>
          <span className="flex h-full items-center border-r border-[#e4e4e4] pl-1.5 pt-px">
            Ордер <span className="pl-2 text-[9px] text-[#888]">∕</span>
          </span>
          {heads.map((h, n) => (
            <span key={n} className="flex h-full items-center justify-end border-r border-[#e4e4e4] pr-1 pt-px last:border-r-0 last:pr-[5px]">
              {h}
            </span>
          ))}
        </div>
        {orders.map((row, r) => (
          <div
            key={row[0]}
            className={`grid h-[18px] items-center ${cols} ${r === 1 ? "bg-[#3075cf] text-[#dfeaf8]" : "text-[#222]"}`}>
            {row.map((c, n) => (
              <span
                key={n}
                className={`flex h-full items-center ${n === 12 ? "" : "border-r border-[#d4d4d4]"} ${
                  n === 0 ? "pl-0.5" : "justify-end pr-[2px] last:pr-[4px]"
                } ${isText(n) ? "tracking-[-0.2px]" : n === 0 || n > 8 ? "tracking-[-0.45px]" : "tracking-[-0.52px]"}`}>
                {n === 0 && (
                  <svg viewBox="0 0 14 14" className="mr-[4px] h-[14px] w-[14px]">
                    <path d="M1.500 1h7.500l3 3v9H1.500z" fill="#fff" stroke="#777" />
                    <circle cx="10" cy="10.500" r="3" fill="#d8491e" stroke="#9c3010" strokeWidth=".6" />
                  </svg>
                )}
                {c}
                {n === 11 && (
                  <svg viewBox="0 0 8 8" className="ml-2 mr-0.5 h-2 w-2">
                    <path d="M1 1l6 6M7 1L1 7" stroke="#9a9a9a" strokeWidth="1.700" />
                  </svg>
                )}
              </span>
            ))}
          </div>
        ))}
        <div className="flex h-[18px] items-center bg-[#c8c8c8] pl-0.5 font-bold text-[#1a1a1a]">
          <svg viewBox="0 0 14 14" className="mr-[4px] h-[14px] w-[14px]">
            <rect x="1.500" y="1.500" width="10" height="11" rx="1.500" fill="#f2f2f2" stroke="#888" />
            <path d="M6.500 3.500l3 3.500-3 3.500-3-3.500z" fill="#d8491e" />
            <circle cx="6.500" cy="7" r="1" fill="#fff" />
          </svg>
          <span className="w-[958px] whitespace-pre tracking-[-0.15px]">
            Баланс: 1 010.70 USD  Средства: 1 000.65  Маржа: 3.51  Свободная маржа: 997.14  Уровень: 28480.80%
          </span>
          <span>-10.05</span>
        </div>
      </div>
      <div className="flex h-[18px] items-start pl-0.5 text-[10.500px] text-[#808080]">
        <span className="-mt-px flex h-[18px] w-[65px] items-center justify-center border-2 border-t-0 border-[#444] bg-white pt-0.5 text-black">
          Торговля
        </span>
        {[
          ["Активы", 55],
          ["История Счета", 91],
          ["Новости", 71, "99"],
          ["Алерты", 55],
          ["Почта", 48],
          ["Маркет", 70, "105"],
          ["Сигналы", 62],
          ["Статьи", 51],
          ["Библиотека", 76],
          ["Эксперты", 65],
          ["Журнал", 58],
        ].map(([name, w, count]) => (
          <span
            key={name}
            style={{ width: w }}
            className="mt-0.5 flex h-[13px] items-center justify-center whitespace-nowrap border-r border-[#777]">
            {name}
            {count && <b className="pl-0.5 pt-[7px] text-[8.500px] leading-none tracking-[-0.3px] text-[#e2413a]">{count}</b>}
          </span>
        ))}
      </div>
    </div>
  </div>
);

const Taskbar = () => (
  <div className="flex h-9 bg-[#020307] text-[#f0f0f0]">
    <div className="flex w-[44px] items-center justify-center">
      <svg viewBox="0 0 16 16" className="h-4 w-4">
        <path d="M0.500 2.500l6.500-1v6H.5zM8 1.400l7.500-1.100v7.200H8zM.5 8.500H7v6l-6.500-1zM8 8.500h7.500v7.200L8 14.600z" fill="#fff" />
      </svg>
    </div>
    <div className="flex w-[43px] items-center justify-center">
      <svg viewBox="0 0 16 16" className="h-4 w-4" fill="none" stroke="#eee" strokeWidth="1.300">
        <circle cx="10" cy="6" r="4.700" />
        <path d="M6.500 9.500L1 15" />
      </svg>
    </div>
    <div className="flex w-[45px] items-center justify-center pr-1">
      <svg viewBox="0 0 16 16" className="h-4 w-4" fill="none" stroke="#ddd" strokeWidth="1.100">
        <path d="M1 1.500v2h9v-2M1 14.500v-2h9v2M1 5.500h9v5H1zM13.500 1v14" />
        <path d="M12.500 6h2.500" strokeWidth="2.400" />
      </svg>
    </div>
    <div className="flex w-[43px] items-center justify-center border-b-2 border-[#87bdf0] bg-[#4a4a4c]">
      <Logo className="mt-0.5 h-[22px] w-[22px] bg-white" />
    </div>
    <div className="flex gap-2 pl-1">
      {[1, 2, 3].map((n) => (
        <div key={n} className="flex w-9 items-center justify-center border-b-2 border-[#87bdf0]">
          <Logo className="mt-0.5 h-[22px] w-[22px] bg-white" />
        </div>
      ))}
    </div>
    <div className="flex-1" />
    <div className="flex w-[202px] items-center text-[10.500px]">
      <svg viewBox="0 0 60 16" className="h-4 w-[60px]" fill="none" stroke="#e8e8e8" strokeWidth="1.200">
        <path d="M4 11l5-5 5 5" />
        <path d="M28 3.500h9.500v8H29M33 11.500v3M29.500 14.500h7M24 2h5v4h-5zM26.500 6v7" />
        <path d="M45.500 6v4h2l3 3V3l-3 3zM52.500 6q1.200 2 0 4M54.500 4.500q2.200 3.500 0 7M56.500 3q3.200 5 0 10" />
      </svg>
      <span className="w-8 pl-[8px] tracking-[-0.1px]">ENG</span>
      <div className="ml-0.5 flex w-[58px] flex-col items-center pl-1 text-[10px] leading-4">
        <span className="tracking-[-0.2px]">20:43</span>
        <span className="tracking-[-0.200px]">14.04.2025</span>
      </div>
      <svg viewBox="0 0 16 16" className="ml-3 h-4 w-4" fill="none" stroke="#f0f0f0" strokeWidth="1.200">
        <path d="M1 1.500h14v11h-5L7.500 15 5 12.500H1z" />
      </svg>
    </div>
  </div>
);

const App = () => {
  return (
    <div className="h-[806px] w-[1290px] overflow-hidden bg-[#efefef] font-['Open_Sans','Noto_Sans',sans-serif] text-[10.500px] leading-none text-[#1a1a1a]">
      <div className="flex h-[21px] items-center bg-white pl-[3px]">
        <Logo className="h-[14px] w-[14px]" />
        <span className="flex-1 pl-1 text-[10.800px] tracking-[-0.3px]">5635089: EGlobalTrade-Cent4 - E-Global Trade and Finance SVG LLC - [NZDCAD,M30]</span>
        <svg viewBox="0 0 100 20" className="mr-3 h-5 w-[100px]" fill="none" stroke="#222" strokeWidth="1.100">
          <path d="M3 9.500h9" />
          <path d="M44 7.500h6.500V13H44zM46 7.500v-2h6.500v6h-2" />
          <path d="M85.500 5l8.500 8.500M94 5l-8.500 8.500" />
        </svg>
      </div>
      <div className="flex h-[19px] items-center border-b border-[#c2c2c2] pl-1 text-[10.600px] tracking-[-0.25px]">
        <svg viewBox="0 0 14 14" className="h-[14px] w-[14px]">
          <rect x="1" y="1" width="9" height="8" rx="1" fill="#e6f0fb" stroke="#7ea6da" />
          <rect x="3.500" y="4.500" width="9.500" height="8.500" rx="1" fill="#f4f9ff" stroke="#6c98d2" />
          <path d="M3.500 5.500H13" stroke="#6c98d2" strokeWidth="1.500" />
          <path d="M5 10.500l2-2 1 2 2-3 1 3" stroke="#5a8cc8" fill="none" strokeWidth=".8" />
        </svg>
        <span className="w-[42px] pl-[7px]">Файл</span>
        <span className="w-[34px] pl-[7px]">Вид</span>
        <span className="w-[54px] pl-[7px]">Вставка</span>
        <span className="w-[59px] pl-[7px] tracking-[-0.1px]">Графики</span>
        <span className="w-[52px] pl-[7px]">Сервис</span>
        <span className="w-[42px] pl-[7px]">Окно</span>
        <span className="pl-[7px]">Справка</span>
        <div className="flex-1" />
        <div className="mr-[1px] flex gap-[2px]">
          {["M4 11h5.500", "M3.500 7.500h5v3.500h-5zM5.500 7v-2h5v4h-2", "M5 5.500l5 5M10 5.500l-5 5"].map((d) => (
            <svg key={d} viewBox="0 0 15 16" className="h-4 w-[15px] bg-white" fill="none" stroke="#6a7686" strokeWidth="1.400">
              <path d={d} />
            </svg>
          ))}
        </div>
      </div>
      <StandardToolbar />
      <DrawToolbar />
      <div className="relative h-[464px]">
        <Chart />
        <FranklinPanel />
      </div>
      <div className="flex h-6 items-start border-t-2 border-[#efefef] text-[10.800px] tracking-[-0.3px] text-[#858585]">
        <span className="flex h-[17px] w-[92px] items-center justify-center border-t border-[#444] pl-[5px]">AUDCAD,M30</span>
        <span className="flex h-[17px] w-[86px] items-center justify-center border-2 border-t-0 border-[#333] bg-white pt-0.5 text-black">
          NZDCAD,M30
        </span>
        {["EURGBP,M30", "GBPCAD,M30", "GBPNZD,M30"].map((t, n) => (
          <span key={t} className={`flex h-[17px] items-center border-t border-[#444] ${n === 0 ? "w-[83px]" : "w-[86px]"}`}>
            <span className="flex h-3 flex-1 items-center justify-center border-r border-[#888]">{t}</span>
          </span>
        ))}
        <div className="flex h-[17px] flex-1 items-center justify-end border-t border-[#444] pr-2">
          <svg viewBox="0 0 22 6" className="h-1.5 w-[22px]">
            <path d="M4 0v6L1 3zM18 0v6l3-3z" fill="#8a8a8a" />
          </svg>
        </div>
      </div>
      <Terminal />
      <div className="flex h-[22px] items-center border-t border-[#c2c2c2] pt-[3px] text-[10.600px]">
        <span className="w-[668px] pl-0.5 tracking-[-0.25px]">Для вызова справки нажмите F1</span>
        <div className="grid h-4 flex-1 grid-cols-[104px_91px_63.500px_64px_61px_62.500px_59px_1fr] items-center tracking-[-0.2px]">
          <span className="flex h-full items-center border-l border-[#bbb] pl-[5px]">Default</span>
          {[1, 2, 3, 4, 5, 6].map((n) => (
            <span key={n} className="h-full border-l border-[#bbb]" />
          ))}
          <span className="flex h-full items-center gap-1 border-l border-[#bbb] pl-1 tracking-[-0.45px]">
            <svg viewBox="0 0 21 12" className="h-3 w-[21px]">
              <path d="M1.500 0v9M4.500 0v8.500M7.500 0v7.500M10.500 0v6.500M13.500 0v5.500M16.500 0v4M19.500 0v3" stroke="#7c8c3c" strokeWidth="2" />
              <path d="M1.500 10v2M4.500 9.500V12M7.500 8.500V12M10.500 7.500V12M13.500 6.500V12M16.500 5V12M19.500 4v8" stroke="#2f5878" strokeWidth="2" />
            </svg>
            86462/30 kb
          </span>
        </div>
      </div>
      <Taskbar />
    </div>
  );
};

export default App;
